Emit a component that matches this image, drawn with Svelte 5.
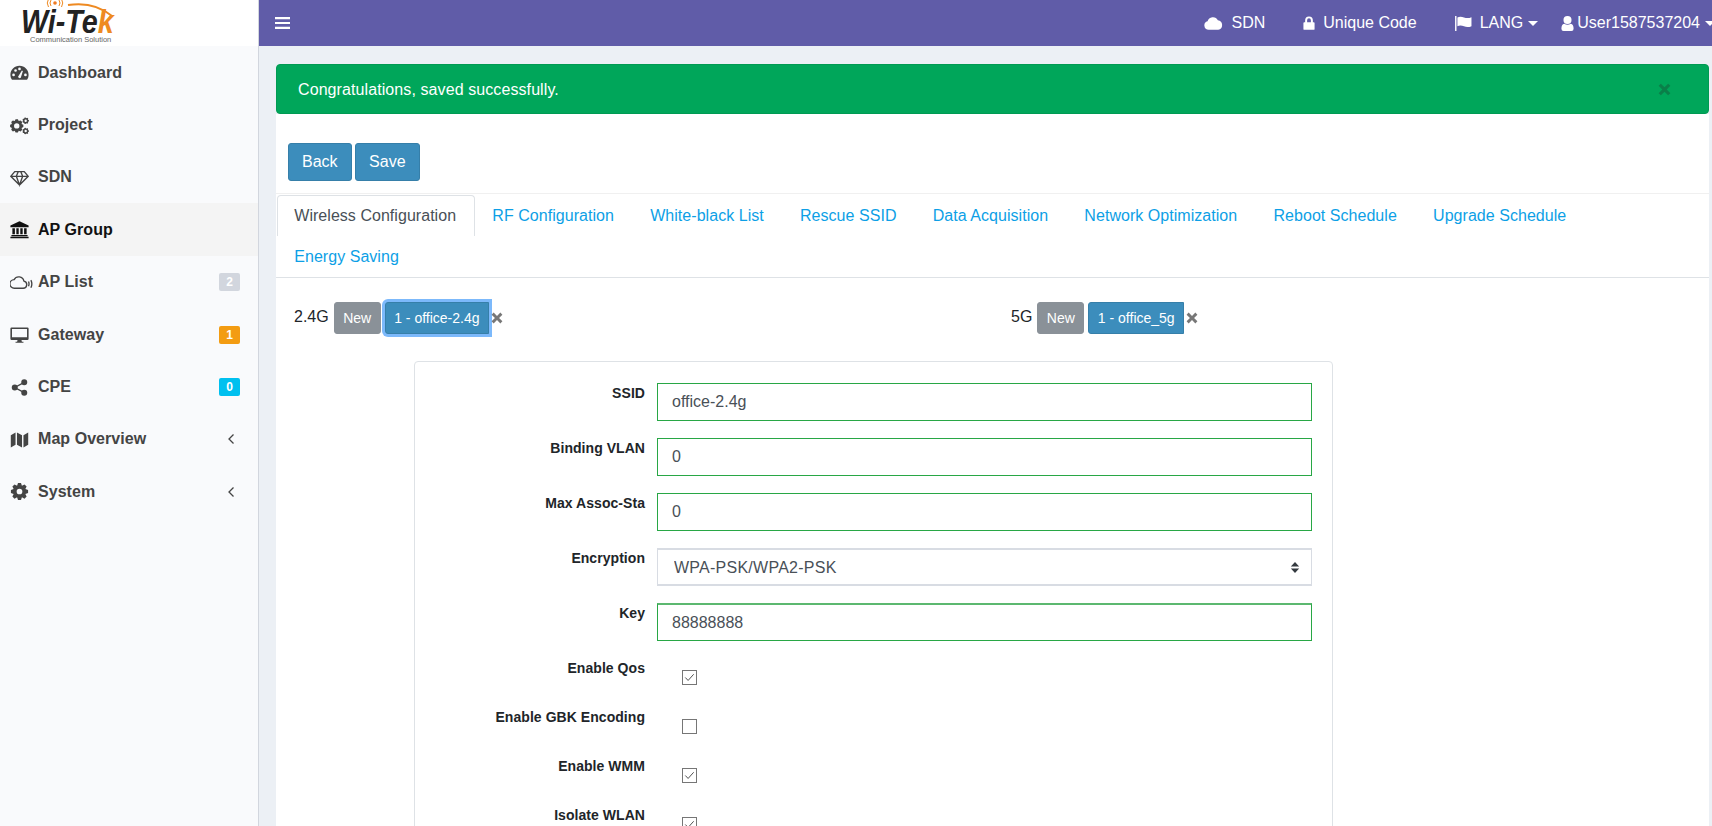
<script>
	// builds a cog outline, used by Project and System
	function gear(cx, cy, ro, ri, hole, teeth) {
		let d = '';
		const step = (Math.PI * 2) / teeth;
		for (let i = 0; i < teeth; i++) {
			const a = i * step;
			const pts = [
				[ri, a - step * 0.5],
				[ro, a - step * 0.22],
				[ro, a + step * 0.22],
				[ri, a + step * 0.5]
			];
			for (const [r, t] of pts) {
				d += `${d ? 'L' : 'M'}${(cx + r * Math.cos(t)).toFixed(2)} ${(cy + r * Math.sin(t)).toFixed(2)}`;
			}
		}
		return d + 'z' + circle(cx, cy, hole);
	}

	function circle(cx, cy, r) {
		return `M${cx - r} ${cy}a${r} ${r} 0 1 0 ${r * 2} 0a${r} ${r} 0 1 0 ${-r * 2} 0z`;
	}

	const icons = {
		dashboard: {
			fill:
				'M12 3.5C5.6 3.5.5 8.6.5 15c0 2 .5 3.9 1.5 5.6.2.3.5.4.8.4h18.4c.3 0 .6-.1.8-.4 1-1.7 1.5-3.6 1.5-5.6C23.500 8.600 18.400 3.500 12 3.500z' +
				circle(4.5, 15, 1.7) + circle(7, 9.5, 1.7) + circle(12, 7.5, 1.7) + circle(19.5, 15, 1.7) +
				'M10.200 17.500L15 9.500l1.300.6-2.700 8.400a2 2 0 0 1-3.400-1z'
		},
		project: { fill: gear(8.5, 12.5, 8.5, 6.6, 3.4, 8) + gear(19.8, 6, 4.2, 3.1, 1.5, 7) + gear(19.8, 19, 4.2, 3.1, 1.5, 7) },
		diamond: { line: 'M6 4.500h12l5 6-11 11-11-11zM1 10.500h22M8 10.500l4 11 4-11M8 10.500l2.500-6M16 10.500l-2.500-6' },
		bank: {
			fill: 'M12 1.500L23.500 7v2H.5V7zM3 10.500h3.200V18H3zM8 10.500h3V18H8zM13 10.500h3V18h-3zM17.800 10.500H21V18h-3.200zM1.800 19h20.400v1.600H1.800zM.5 21.200h23V23H.5z'
		},
		apcloud: { line: 'M4.500 18h9a3.800 3.800 0 0 0 1-7.500 5.500 5.500 0 0 0-10.200-1.500A4.500 4.500 0 0 0 4.500 18zM19.300 11q1.100 2.500 0 5M21.800 9.500q2 4 0 8', wide: true },
		desktop: {
			fill: 'M2 3h20a1.500 1.500 0 0 1 1.500 1.500v13A1.500 1.500 0 0 1 22 19h-7.500l.5 2h2v1.500H7V21h2l.5-2H2A1.500 1.500 0 0 1 .5 17.500v-13A1.500 1.500 0 0 1 2 3zM2.500 5v10.500h19V5z'
		},
		share: { fill: circle(18, 5.5, 3.8) + circle(6, 12, 3.8) + circle(18, 18.5, 3.8), line: 'M18 5.500L6 12l12 6.500' },
		map: { fill: 'M1 6.500L7 3v15.500L1 22zM8.800 3l6.400 3.500V22l-6.400-3.500zM17 6.500L23 3v15.500L17 22z' },
		cog: { fill: gear(12, 12, 11, 8, 3.6, 8) }
	};

	const nav = [
		{ label: 'Dashboard', icon: 'dashboard' },
		{ label: 'Project', icon: 'project' },
		{ label: 'SDN', icon: 'diamond' },
		{ label: 'AP Group', icon: 'bank', active: true },
		{ label: 'AP List', icon: 'apcloud', badge: '2', tone: 'grey' },
		{ label: 'Gateway', icon: 'desktop', badge: '1', tone: 'amber' },
		{ label: 'CPE', icon: 'share', badge: '0', tone: 'cyan' },
		{ label: 'Map Overview', icon: 'map', chevron: true },
		{ label: 'System', icon: 'cog', chevron: true }
	];

	const tabs = [
		'Wireless Configuration',
		'RF Configuration',
		'White-black List',
		'Rescue SSID',
		'Data Acquisition',
		'Network Optimization',
		'Reboot Schedule',
		'Upgrade Schedule',
		'Energy Saving'
	];

	const textFields = [
		{ label: 'SSID', value: 'office-2.4g' },
		{ label: 'Binding VLAN', value: '0' },
		{ label: 'Max Assoc-Sta', value: '0' }
	];

	const checks = [
		{ label: 'Enable Qos', on: true },
		{ label: 'Enable GBK Encoding', on: false },
		{ label: 'Enable WMM', on: true },
		{ label: 'Isolate WLAN', on: true }
	];
</script>

{#snippet closeIcon()}
	<svg class="x" viewBox="1 1 10 10" aria-hidden="true">
		<path d="M1.500 3.200L3.200 1.500 6 4.300l2.800-2.800 1.700 1.700L7.700 6l2.800 2.800-1.700 1.700L6 7.700l-2.800 2.800-1.700-1.700L4.300 6z" />
	</svg>
{/snippet}

<div class="layout">
	<aside class="sidebar">
		<div class="logo">
			<svg viewBox="0 0 258 46" width="258" height="46" aria-label="Wi-Tek logo">
				<path d="M68 5Q94 1 112 16" fill="none" stroke="#ee8a22" stroke-width="2" />
				<circle cx="55" cy="3" r="1.800" fill="#ee7a22" />
				<path d="M51 0q-2 3 0 6M59 0q2 3 0 6M48.500 -1q-2.500 4 0 8M61.500 -1q2.500 4 0 8" fill="none" stroke="#ee8a22" stroke-width="1" />
				<text class="brand" transform="translate(21 33) scale(0.87 1)">Wi-Te<tspan fill="#ee8a22">k</tspan></text>
				<text x="30" y="41.500" class="tagline">Communication Solution</text>
			</svg>
		</div>
		<nav>
			{#each nav as item}
				<div class="nav-item" class:active={item.active}>
					<svg class="nav-icon" class:wide={icons[item.icon].wide} viewBox="0 0 24 24" aria-hidden="true">
						{#if icons[item.icon].fill}
							<path d={icons[item.icon].fill} fill="currentColor" fill-rule="evenodd" />
						{/if}
						{#if icons[item.icon].line}
							<path d={icons[item.icon].line} fill="none" stroke="currentColor" stroke-width={icons[item.icon].wide ? 1.4 : 1.7} />
						{/if}
					</svg>
					<span class="nav-label">{item.label}</span>
					{#if item.badge}
						<span class="badge {item.tone}">{item.badge}</span>
					{/if}
					{#if item.chevron}
						<svg class="chevron" viewBox="0 0 8 12" aria-hidden="true">
							<path d="M6.500 1.500L2 6l4.500 4.500" fill="none" stroke="currentColor" stroke-width="1.300" />
						</svg>
					{/if}
				</div>
			{/each}
		</nav>
	</aside>

	<div class="main">
		<header class="topbar">
			<svg class="burger" viewBox="0 0 15 12" aria-hidden="true">
				<path d="M0 0h15v2.200H0zM0 4.900h15v2.200H0zM0 9.800h15V12H0z" />
			</svg>
			<div class="top-links">
				<span class="top-link sdn">
					<svg class="cloud" viewBox="0 0 24 16" aria-hidden="true">
						<path d="M6 16a5.500 5.500 0 0 1-1.500-10.800A7 7 0 0 1 17.500 3.800 6.200 6.200 0 0 1 18 16z" />
					</svg>
					SDN
				</span>
				<span class="top-link code">
					<svg class="lock" viewBox="0 0 14 16" aria-hidden="true">
						<path fill-rule="evenodd" d="M2.500 7V4.800a4.500 4.500 0 0 1 9 0V7h1a1 1 0 0 1 1 1v7a1 1 0 0 1-1 1h-11a1 1 0 0 1-1-1V8a1 1 0 0 1 1-1zM4.800 7h4.400V4.800a2.200 2.200 0 0 0-4.400 0z" />
					</svg>
					Unique Code
				</span>
				<span class="top-link lang">
					<svg class="flag" viewBox="0 0 18 16" aria-hidden="true">
						<path d="M0 0h1.500v16H0zM2.500 1.500q3-1.500 7 0t8-.2v9.500q-4 1.700-8 .2t-7 0z" />
					</svg>
					LANG<i class="caret"></i>
				</span>
				<span class="top-link user">
					<svg class="person" viewBox="0 0 13 16" aria-hidden="true">
						<path d="M6.500 0a3.900 3.900 0 1 1 0 8.600 3.900 3.900 0 0 1 0-8.600zM3 8.200q3.500 2.200 7 0 3 .5 3 5.300 0 2.500-2.300 2.500H2.300Q0 16 0 13.500q0-4.800 3-5.300z" />
					</svg>
					User1587537204<i class="caret"></i>
				</span>
			</div>
		</header>

		<div class="content">
			<div class="alert">
				<span>Congratulations, saved successfully.</span>
				<svg class="alert-x" viewBox="1 1 10 10" aria-hidden="true">
					<path d="M1.500 3.200L3.200 1.500 6 4.300l2.800-2.800 1.700 1.700L7.700 6l2.800 2.800-1.700 1.700L6 7.700l-2.800 2.800-1.700-1.700L4.300 6z" />
				</svg>
			</div>

			<div class="card">
				<div class="actions">
					<button class="btn primary">Back</button>
					<button class="btn primary">Save</button>
				</div>

				<ul class="tabs">
					{#each tabs as tab, i}
						<li class="tab" class:current={i === 0}>{tab}</li>
					{/each}
				</ul>

				<div class="bands">
					<div class="band">
						<span class="band-name">2.4G</span>
						<button class="btn small muted">New</button>
						<button class="btn small primary chip focused">1 - office-2.4g</button>
						{@render closeIcon()}
					</div>
					<div class="band">
						<span class="band-name">5G</span>
						<button class="btn small muted">New</button>
						<button class="btn small primary chip">1 - office_5g</button>
						{@render closeIcon()}
					</div>
				</div>

				<form class="form-box">
					{#each textFields as field}
						<div class="row">
							<span class="row-label">{field.label}</span>
							<input class="field" value={field.value} readonly />
						</div>
					{/each}
					<div class="row">
						<span class="row-label">Encryption</span>
						<div class="select-wrap">
							<select class="field plain">
								<option>WPA-PSK/WPA2-PSK</option>
							</select>
							<svg class="updown" viewBox="0 0 10 14" aria-hidden="true">
								<path d="M5 1l4.500 4.800H.5zM5 13L.5 8.200h9z" />
							</svg>
						</div>
					</div>
					<div class="row">
						<span class="row-label">Key</span>
						<input class="field key" value="88888888" readonly />
					</div>
					{#each checks as check}
						<div class="row check-row">
							<span class="row-label">{check.label}</span>
							<span class="check" role="checkbox" aria-checked={check.on} aria-label={check.label}>
								{#if check.on}
									<svg viewBox="0 0 14 14" aria-hidden="true">
										<path d="M2.500 7l3 3.200L11.500 3.500" fill="none" stroke="#444" stroke-width="1" />
									</svg>
								{/if}
							</span>
						</div>
					{/each}
				</form>
			</div>
		</div>
	</div>
</div>

<style>
	:global(body) {
		margin: 0;
		overflow: hidden;
		background: #ecf0f5;
		font-family: 'Liberation Sans', Arial, sans-serif;
		font-size: 16px;
		color: #212529;
	}

	.layout {
		display: flex;
		height: 826px;
		overflow: hidden;
	}

	.sidebar {
		flex: 0 0 258px;
		background: #f9fafc;
		border-right: 1px solid #d2d6de;
	}

	.logo {
		height: 46px;
		background: #fff;
		overflow: hidden;
	}

	.logo svg {
		display: block;
	}

	.brand {
		font: italic bold 33px 'Liberation Sans', Arial, sans-serif;
		fill: #222;
	}

	.tagline {
		font: 7.500px 'Liberation Sans', Arial, sans-serif;
		fill: #666;
	}

	.nav-item {
		box-sizing: border-box;
		display: flex;
		align-items: center;
		height: 52.400px;
		padding: 1px 18px 0 10px;
		color: #444;
		font-weight: bold;
		letter-spacing: 0.05px;
	}

	.nav-item.active {
		background: #f4f4f4;
		color: #111;
	}

	.nav-icon {
		flex: none;
		width: 19px;
		height: 19px;
		margin-right: 9px;
	}

	.nav-icon.wide {
		width: 23px;
		height: 23px;
		margin-right: 5px;
	}

	.nav-label {
		flex: 1;
	}

	.badge {
		width: 21px;
		height: 18px;
		border-radius: 2px;
		color: #fff;
		font-size: 12px;
		line-height: 18px;
		text-align: center;
	}

	.badge.grey {
		background: #d2d6de;
	}

	.badge.amber {
		background: #f39c12;
	}

	.badge.cyan {
		background: #00c0ef;
	}

	.chevron {
		width: 8px;
		height: 12px;
		margin-right: 5px;
	}

	.main {
		flex: 1;
		min-width: 0;
		display: flex;
		flex-direction: column;
	}

	.topbar {
		flex: none;
		height: 46px;
		display: flex;
		align-items: center;
		justify-content: space-between;
		padding-left: 16px;
		background: #605ca8;
		color: #fff;
	}

	.burger {
		width: 15px;
		height: 12px;
		fill: #fff;
	}

	.top-links {
		display: flex;
		align-items: center;
		white-space: nowrap;
	}

	.top-links svg {
		fill: #fff;
		flex: none;
	}

	.top-link {
		display: flex;
		align-items: center;
		gap: 8px;
	}

	.sdn {
		margin-right: 38px;
	}

	.code {
		margin-right: 38px;
	}

	.lang {
		margin-right: 23px;
	}

	.user {
		gap: 3px;
		margin-right: -3px;
	}

	.cloud {
		width: 19px;
		height: 13px;
	}

	.lock {
		width: 12px;
		height: 14px;
	}

	.flag {
		width: 17px;
		height: 15px;
	}

	.person {
		width: 13px;
		height: 15px;
	}

	.caret {
		width: 0;
		height: 0;
		margin-left: -3px;
		border-left: 5px solid transparent;
		border-right: 5px solid transparent;
		border-top: 5px solid #fff;
	}

	.user .caret {
		margin-left: 2px;
	}

	.content {
		flex: 1;
		min-height: 0;
		padding: 18px 3px 0 17px;
		display: flex;
		flex-direction: column;
	}

	.alert {
		flex: none;
		height: 50px;
		box-sizing: border-box;
		display: flex;
		align-items: center;
		justify-content: space-between;
		padding: 1px 37px 0 21px;
		background: #00a65a;
		border: 1px solid #009a53;
		border-radius: 4px;
		color: #fff;
		letter-spacing: 0.09px;
	}

	.alert-x {
		width: 13px;
		height: 13px;
		fill: #0a7f49;
	}

	.card {
		flex: 1;
		background: #fff;
	}

	.actions {
		display: flex;
		gap: 3.500px;
		padding: 29px 12px 12px;
	}

	.btn {
		font: inherit;
		color: #fff;
		border: 1px solid transparent;
		border-radius: 3px;
		padding: 0 13px;
		height: 38px;
	}

	.btn.primary {
		background: #3c8dbc;
		border-color: #367fa9;
	}

	.btn.small {
		font-size: 14px;
		height: 32px;
		padding: 0 8.500px;
	}

	.btn.muted {
		background: #8a9198;
		border-color: #8a9198;
		width: 47px;
		padding: 0;
	}

	.btn.chip {
		margin-left: 4px;
		border-radius: 3px 0 0 3px;
	}

	.btn.focused {
		box-shadow: 0 0 0 3px #7cb9fb;
	}

	.tabs {
		display: flex;
		flex-wrap: wrap;
		margin: 0;
		padding: 1px 0 0 1px;
		list-style: none;
		border-top: 1px solid #f0f0f0;
		border-bottom: 1px solid #dee2e6;
	}

	.tab {
		box-sizing: border-box;
		height: 41px;
		line-height: 39px;
		padding: 0 18px 0 16.250px;
		color: #0d9fe6;
		white-space: nowrap;
		letter-spacing: 0.04px;
		border: 1px solid transparent;
		border-bottom: 0;
	}

	.tab.current {
		color: #495057;
		border-color: #dee2e6;
		border-radius: 4px 4px 0 0;
	}

	.bands {
		display: flex;
		padding: 24px 0 0 18px;
	}

	.band {
		flex: 0 0 717px;
		display: flex;
		align-items: center;
		height: 32px;
	}

	.band-name {
		margin-right: 5px;
		position: relative;
		top: -1px;
	}

	.x {
		width: 12px;
		height: 12px;
		margin-left: 2px;
		fill: #777;
	}

	.form-box {
		box-sizing: border-box;
		width: 919px;
		margin: 27px 0 0 138px;
		padding: 21px 20px 0 0;
		border: 1px solid #dee2e6;
		border-radius: 4px;
	}

	.row {
		display: grid;
		grid-template-columns: 230px 1fr;
		column-gap: 12px;
		margin-bottom: 17px;
		min-height: 38px;
	}

	.row-label {
		padding-top: 1px;
		text-align: right;
		font-size: 14px;
		font-weight: bold;
		line-height: 18px;
		letter-spacing: 0.05px;
		color: #212529;
	}

	.field {
		box-sizing: border-box;
		width: 100%;
		height: 38px;
		padding: 0 14px;
		font: inherit;
		color: #495057;
		background: #fff;
		border: 1px solid #28a745;
		border-radius: 0;
		outline: none;
	}

	.field.key {
		border-top: 2px solid #5cb870;
	}

	.field.plain {
		appearance: none;
		padding: 0 16px;
		letter-spacing: 0.25px;
		border: 1px solid #d8dce3;
		border-width: 2px 1px;
	}

	.select-wrap {
		position: relative;
	}

	.updown {
		position: absolute;
		right: 12px;
		top: 13px;
		width: 10px;
		height: 13px;
		fill: #343a40;
	}

	.check-row {
		min-height: 32px;
	}

	.check {
		box-sizing: border-box;
		display: block;
		width: 15px;
		height: 15px;
		margin: 12px 0 0 25px;
		background: #fff;
		border: 1px solid #767676;
	}

	.check svg {
		display: block;
		width: 13px;
		height: 13px;
	}
</style>
